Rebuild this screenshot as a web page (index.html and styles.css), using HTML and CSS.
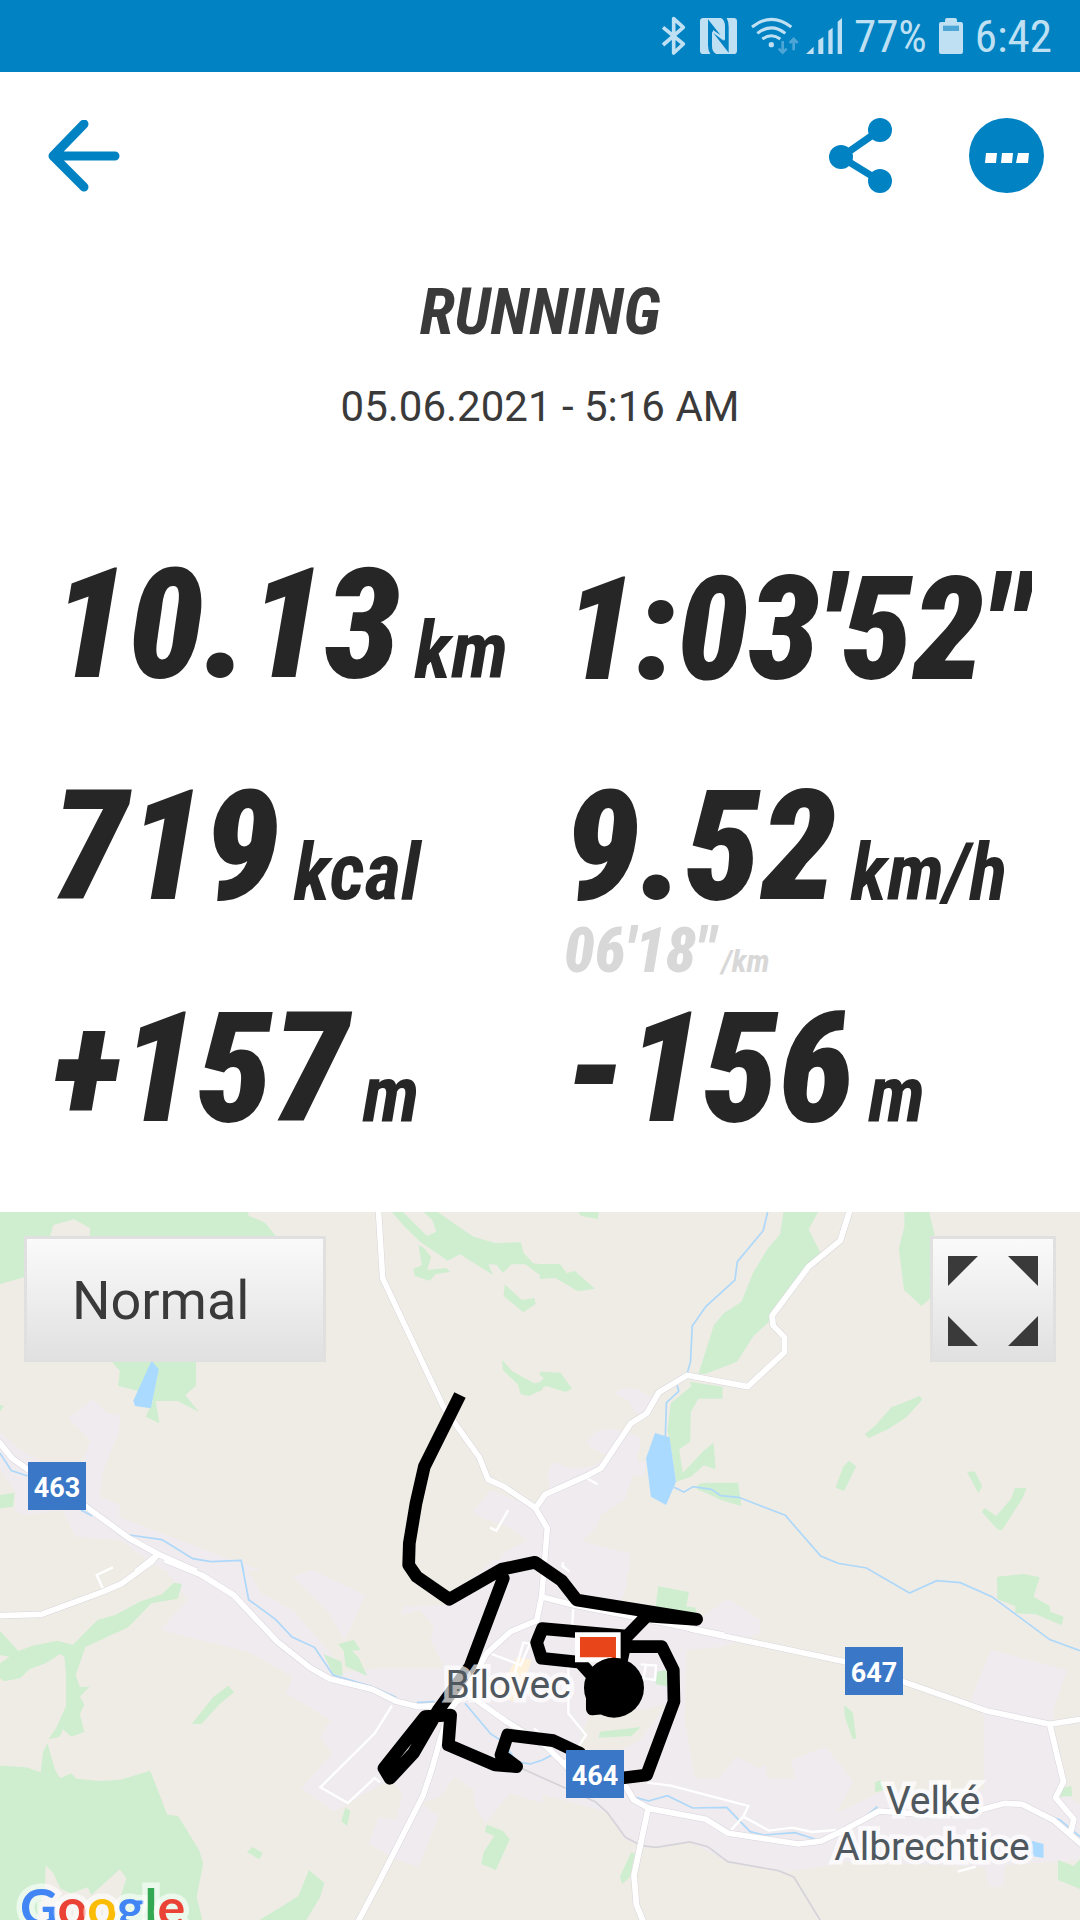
FILE: index.html
```html
<!DOCTYPE html>
<html lang="en">
<head>
<meta charset="utf-8">
<meta name="viewport" content="width=device-width, initial-scale=1">
<title>Running</title>
<link rel="stylesheet" href="styles.css">
</head>
<body>
<div class="status">
  <svg class="bt" viewBox="60 48 75 120"><path d="M66 82L127 132L98 159V56L127 82L66 135" fill="none" stroke="currentColor" stroke-width="11" stroke-linejoin="round"/></svg>
  <svg class="nfc" viewBox="177 54 111 108"><path fill="currentColor" d="M187 54H240Q252 60 252 80V122L201 58V136Q201 152 208 162H187Q177 162 177 152V64Q177 54 187 54ZM257 54H278Q288 54 288 64V152Q288 162 278 162H226Q213 156 213 138V94L263 158V82Q263 64 257 54ZM216 90L248 112V122L216 98Z"/></svg>
  <svg class="wifi" viewBox="330 48 147 117"><g fill="none" stroke="currentColor" stroke-width="9"><path d="M333 78Q391 32 451 78M349 97Q391 64 433 97M364 114Q391 94 418 114"/></g><circle cx="391" cy="131" r="8" fill="currentColor"/><path class="dim" d="M425 120V154M413 143L425 155L437 143M458 148V114M446 126L458 114L470 126" fill="none" stroke-width="8"/></svg>
  <svg class="signal" viewBox="493 51 108 108"><path fill="currentColor" d="M493 159L516 137V159ZM530 159V118L545 108V159ZM560 159V90L573 80V159ZM588 159V62L601 51V159Z"/></svg>
  <span>77%</span>
  <svg class="battery" viewBox="894 54 72 108"><path fill="currentColor" d="M900 66H912V60Q912 54 918 54H942Q948 54 948 60V66H960Q966 66 966 72V156Q966 162 960 162H900Q894 162 894 156V72Q894 66 900 66Z"/><path fill="#4da6d5" d="M906 77H954V93H906Z"/></svg>
  <time>6:42</time>
</div>

<header class="toolbar">
  <button class="icon-button back" aria-label="Back"><svg viewBox="0 0 72 72"><path d="M36 4L5 36L36 67M5 36H67" fill="none" stroke="currentColor" stroke-width="9" stroke-linecap="round" stroke-linejoin="round"/></svg></button>
  <button class="icon-button share" aria-label="Share"><svg viewBox="0 0 63 75"><path d="M51 12L12 39L51 63" fill="none" stroke="currentColor" stroke-width="7"/><g fill="currentColor"><circle cx="51" cy="12" r="12"/><circle cx="12" cy="39" r="12"/><circle cx="51" cy="63" r="12"/></g></svg></button>
  <button class="icon-button more" aria-label="More"><svg viewBox="0 0 75 75"><circle cx="37.5" cy="37.5" r="37.5" fill="currentColor"/><path fill="#fff" d="M17 35H28L27 45H16ZM33 35H44L43 45H32ZM49 35H60L59 45H47Z"/></svg></button>
</header>

<main>
  <section class="heading">
    <h1>RUNNING</h1>
    <p>05.06.2021 - 5:16 AM</p>
  </section>

  <section class="stats">
    <div class="stat"><strong>10.13</strong><span>km</span></div>
    <div class="stat duration"><strong>1:03'52"</strong></div>
    <div class="stat"><strong>719</strong><span>kcal</span></div>
    <div class="stat"><strong>9.52</strong><span>km/h</span>
      <div class="pace"><b>06'18"</b><span>/km</span></div>
    </div>
    <div class="stat"><strong>+157</strong><span>m</span></div>
    <div class="stat"><strong>-156</strong><span>m</span></div>
  </section>

  <section class="map">
    <svg class="canvas" viewBox="0 0 1080 708">
      <defs>
        <g id="roads">
          <g transform="translate(0 -2) scale(.3444 .3333)"><path d="M-10 690L0 700L35 745L80 778L250 890L375 985L460 1033L570 1083M460 1033L395 1085"/></g>
          <g transform="translate(540 -2) scale(.3444 .3333)"><path d="M903 -10L872 92L780 170L674 317L677 347L710 382L710 427L603 530L427 496L345 547L310 610L264 640L177 775L130 800L15 853L-12 893"/></g>
          <g transform="translate(0 348) scale(.3444 .3333)"><path d="M460 -20L440 5L355 70L300 95L120 163L-10 167M478 0L585 45L678 105L805 245L900 323L958 357L1080 388L1150 424L1215 440L1262 437L1320 440"/></g>
          <g transform="translate(360 158) scale(.3333)"><path d="M54 -500L68 -275L250 110L285 160L358 262L384 328L432 350L525 413L562 475L545 680L530 752L452 785L380 850L320 960L270 1020L240 1110L218 1190L190 1275L60 1530L-40 1720M550 682L640 705L840 745L1090 795M320 970L440 1055L560 1130L640 1210"/></g>
          <g transform="translate(540 348) scale(.3444 .3333)"><path d="M430 203L440 208L886 305L1054 365L1295 452L1480 493L1580 476M1480 493L1520 665L1497 713L1550 778L1540 820M70 600L100 640L250 680L272 720L318 746L482 778L547 820L750 852L815 844L880 812L985 753L1130 765L1260 755L1350 730L1400 733L1490 780L1580 860M314 746L273 945L280 1035L300 1085"/></g>
        </g>
      </defs>

      <rect class="land" width="1080" height="708"/>

      <g class="urban">
        <path transform="translate(0 -2) scale(.3444 .3333)" d="M198 625L270 568L310 610L350 615L345 665L300 780L290 860L348 885L345 920L480 975L760 1083H480L400 1030L350 990L220 980L180 900L80 915L45 905V840L0 780V665L60 720L120 755H240L262 690ZM1372 905L1425 840L1500 870L1575 890V1083H1430L1460 1030L1530 990L1465 945L1400 925Z"/>
        <path transform="translate(540 -2) scale(.3444 .3333)" d="M215 550L240 533L290 540L318 560H345L310 610H275L260 575ZM135 695L160 665L205 655L290 680V710L280 750L308 760L303 800L270 795L245 870L175 915L160 960L120 993L260 1030V1083H-5V880L30 840L20 790L40 757L90 775L150 770L200 740L150 715Z"/>
        <path transform="translate(0 348) scale(.3444 .3333)" d="M460 0H700L760 100L850 150L960 280L990 340L1100 325H1290L1250 240L1260 200L1220 150L1165 165L1170 140L1290 135L1430 0H1575V730L1480 700L1410 790L1380 740L1375 690L1320 650L1280 710L1220 730L1275 765L1215 920L1150 900L1070 850L1100 770L1150 780L1170 700L1130 660L970 755L875 685L965 580L930 530L960 480L830 400L850 350L720 275L465 210L545 120ZM850 50L905 30L1060 105L1020 200L1000 240L950 150Z"/>
        <path transform="translate(540 348) scale(.3444 .3333)" fill-rule="evenodd" d="M-5 0H258L250 80L220 170L395 190L450 185L545 115L640 180V220L530 260L425 270L420 480L450 655H520L570 590L635 625L655 612L660 655H740L730 600L830 560L910 665L860 760L1000 690H1290V470L1250 420L1310 270L1530 330L1490 450L1510 690L1575 740V900L1350 915L1345 980H1305L1290 920L900 905L720 935L545 905L435 846L337 862L250 840L195 757L-5 700ZM150 440L300 450L370 430L290 540L180 600L110 560Z"/>
      </g>
      <path class="centre" transform="translate(360 158) scale(.3333)" d="M472 862L515 870L490 940L460 995L405 965L440 920Z"/>

      <g class="forest">
        <path transform="translate(0 -2) scale(.3444 .3333)" fill-rule="evenodd" d="M0 6H720L722 17L770 38L802 80H75V200L0 222ZM155 45L215 28L262 55L260 80H145ZM320 450H569V527L538 556L578 606L516 573H452L463 640L423 620L445 570L397 542L343 527L348 482ZM1138 6L1175 50L1220 95L1300 152L1335 133L1432 195L1418 163L1442 164L1460 189L1485 163H1525L1575 200V163L1548 160L1520 128L1512 96L1440 100L1375 80L1270 6ZM1170 6L1240 78L1267 65L1255 30L1230 6ZM1215 105L1232 115L1252 142L1240 180L1295 174L1308 186L1265 192L1248 212L1205 198L1200 178L1225 165ZM1466 223L1515 270L1552 264L1555 282L1520 307L1462 258ZM1458 450L1488 484L1550 520L1575 515V540L1535 558L1512 552L1503 523L1460 480ZM0 585L12 587L0 604ZM0 855L42 848L38 890L0 895Z"/>
        <path transform="translate(540 -2) scale(.3444 .3333)" d="M707 6H808L780 58L815 130L775 170L675 310L665 335L620 378L572 455L480 492H460L505 345L535 308L585 275L620 185L660 118L697 73ZM435 515L530 530V566H460L438 605L436 695L404 718L415 788L475 722L504 698L510 778L476 766L438 800L396 815L378 700L370 660L380 580L440 528ZM1058 6H1130L1145 70L1133 265L1108 288L1057 240L1042 115L1058 50ZM110 6H171L168 27L120 18ZM0 162H58L78 190L100 182L160 236L110 244L45 204L0 207ZM0 485L60 488L93 536L73 546L18 528L0 537V515L12 505L0 495ZM943 673L975 645L1020 592L1103 558L1110 569L1062 623L1010 658L955 684ZM858 833L880 770L897 752L918 769L883 843ZM1240 786L1262 784L1284 829L1273 850ZM1283 906L1291 894L1325 918L1368 866L1379 834H1413L1400 866L1342 960L1328 958ZM460 822L480 818H575L585 888L525 870L485 850L455 838Z"/>
        <path transform="translate(0 348) scale(.3444 .3333)" fill-rule="evenodd" d="M0 212L53 273L95 257L165 242L212 254L283 180L335 165L405 125L470 103L505 68L528 72L516 116L440 130L372 202L248 261L220 345L232 381L260 380L232 410L245 433L232 463L245 515L207 530L183 508L173 530L141 538L165 500L192 437V350L187 290L175 282L133 310L85 328L60 354L12 364L0 355V310L28 290L0 285ZM138 550L160 630L175 655L207 640L222 656L290 663L350 659L436 632L486 764L517 768L578 870L590 910L571 1010L588 1083H0V617L75 622L118 637L125 575ZM133 915L155 940L175 985L205 1000L255 982L265 1005L348 928L367 955L350 1010L330 1083H105L130 985ZM557 491L620 410L662 377L680 397L640 430L585 492ZM982 252L1027 240L1047 270L1022 272L1042 293L1066 348L1003 318L998 272ZM940 283L992 305L995 347L968 345ZM1003 743L1017 752L1008 798L991 784ZM717 876L733 861L763 879L753 898ZM1413 794L1460 812L1480 838L1440 930L1397 912L1405 875L1435 828L1408 815ZM897 930L942 968L930 1010L888 1083H748L810 1045L867 1007Z"/>
        <path transform="translate(540 348) scale(.3444 .3333)" d="M343 79L432 96L425 140L450 142L460 170L335 150ZM1327 50L1405 42L1451 52L1433 110L1480 138L1482 155L1520 170L1515 196L1440 163L1380 160V138L1328 118ZM883 435L908 457L918 535L908 538L885 470ZM170 533L175 515L293 501L265 528ZM340 335L368 330L372 380L335 372ZM973 667L990 660L1000 690L973 697ZM1510 710L1518 685L1543 677L1545 708ZM265 877L275 880L262 950L238 972L232 950ZM1504 900L1550 918L1575 890V990L1504 960Z"/>
      </g>

      <g class="lake">
        <path transform="translate(0 -2) scale(.3444 .3333)" d="M440 452L461 478L438 595L392 588L387 572Z"/>
        <path transform="translate(540 -2) scale(.3444 .3333)" d="M334 669L376 682L395 815L366 885L322 860L308 745Z"/>
        <path transform="translate(540 348) scale(.3444 .3333)" d="M1427 842L1462 852V894L1427 888Z"/>
      </g>

      <g class="stream">
        <path transform="translate(0 -2) scale(.3444 .3333)" d="M0 730L33 782L80 798M235 900L268 918M375 975L470 989L560 1046L612 1055L700 1051L707 1083"/>
        <path transform="translate(540 -2) scale(.3444 .3333)" d="M661 6L648 62L573 155L566 210L482 289L442 348L437 455L428 488M398 526L403 544L367 578L364 680M389 832L418 846L445 830L498 838L525 857L577 862L712 916L815 1038L865 1060L948 1074L1073 1149L1152 1112L1220 1118L1312 1160L1480 1289L1568 1322"/>
        <path transform="translate(0 348) scale(.3444 .3333)" d="M702 10L722 119L800 178L848 231L913 262L967 345L1080 380L1150 412M1210 428L1262 425M1350 430L1425 522L1460 545L1500 605L1540 612L1575 600L1603 585"/>
        <path transform="translate(540 348) scale(.3444 .3333)" d="M280 713L315 723L370 707L443 744L542 742L610 815L650 825L740 818L800 838M920 790L980 740M1470 765L1510 780L1568 830"/>
      </g>

      <g class="rail">
        <path transform="translate(540 348) scale(.3444 .3333)" d="M-60 622L0 650L75 685L160 725L195 757L248 832L295 857L337 862L435 846L487 860L545 905L692 932L737 951L815 1083"/>
      </g>

      <g class="lane">
        <path transform="translate(0 348) scale(.3444 .3333)" d="M328 22L281 45L298 85M1138 437L1088 520L930 682L1010 729L1088 654L1104 667"/>
        <path transform="translate(360 158) scale(.3333)" d="M445 420L409 482L390 473M680 325L713 343M610 577L607 588L628 605M395 852L480 885M460 925L490 818L510 822L480 890M640 715L635 790M625 880V1030L678 1095L655 1130M842 883L888 887L885 930L850 925L858 885M522 1075L560 1105"/>
        <path transform="translate(540 348) scale(.3444 .3333)" d="M310 668L380 677L605 738L590 770L555 810M590 770L665 812L732 803L790 816L860 810M1213 935L1265 920"/>
      </g>

      <use href="#roads" class="casing"/>
      <use href="#roads" class="road"/>

      <g transform="translate(360 158) scale(.3333)">
        <g class="route">
          <path stroke-linecap="butt" d="M300 75L193 290L168 400L148 520L146 585L170 620L268 688L425 598L525 577L605 632L650 690L1010 748L860 738L800 800L785 870"/>
          <path d="M430 625L330 890L235 1020L160 1150L90 1225L72 1195L195 1040L272 1035L265 1125L405 1185L470 1190L423 1155L443 1095L580 1112L660 1150M780 1225L860 1215L942 995L940 900L905 830H800M800 798L547 776L530 818L545 865L660 877L690 910"/>
          <path d="M697 950V1017L720 1015"/>
        </g>
        <path fill="#fff" d="M645 787H782V877H645Z"/>
        <path fill="#e8461a" d="M660 801H768V877H755V862H660Z"/>
        <circle cx="762" cy="953" r="90"/>
      </g>

      <g class="shield">
        <rect x="28" y="250" width="58" height="48"/><text x="57" y="285">463</text>
        <rect x="845" y="435" width="58" height="48"/><text x="874" y="470">647</text>
        <rect x="566" y="538" width="58" height="48"/><text x="595" y="573">464</text>
      </g>
      <g class="place">
        <text x="508" y="486">Bílovec</text>
        <text x="933" y="602">Velké</text>
        <text x="932" y="648">Albrechtice</text>
      </g>
      <text class="google" x="20" y="714"><tspan fill="#4285f4">G</tspan><tspan fill="#ea4335">o</tspan><tspan fill="#fbbc05">o</tspan><tspan fill="#4285f4">g</tspan><tspan fill="#34a853">l</tspan><tspan fill="#ea4335">e</tspan></text>
    </svg>
    <div class="controls">
      <select class="layer" aria-label="Map type"><option>Normal</option><option>Satellite</option></select>
      <button class="fullscreen" aria-label="Full screen"><svg viewBox="0 0 90 90"><path fill="currentColor" d="M0 0H30L0 30ZM60 0H90V30ZM0 60L30 90H0ZM90 60V90H60Z"/></svg></button>
    </div>
  </section>
</main>
</body>
</html>
```
FILE: styles.css
```css
* {
  box-sizing: border-box;
}

body {
  margin: 0;
  background: #fff;
  color: #3a3a3a;
  font-family: Roboto, "Liberation Sans", sans-serif;
}

button,
select {
  margin: 0;
  font: inherit;
  color: inherit;
  cursor: pointer;
}

svg {
  display: block;
}

/* status bar */
.status {
  display: flex;
  align-items: center;
  justify-content: flex-end;
  gap: 12px;
  height: 72px;
  padding-right: 28px;
  background: #0082c3;
  color: #bfe0f2;
  font-family: "Roboto Condensed", "Liberation Sans Narrow", Roboto, sans-serif;
  font-size: 45px;
}

.bt { width: 25px; height: 40px; margin-right: 2px; }
.nfc { width: 37px; height: 36px; margin-right: 2px; }
.wifi { width: 49px; height: 39px; margin-right: -6px; }
.signal { width: 36px; height: 36px; }
.battery { width: 24px; height: 36px; }
.dim { stroke: #4da6d5; }

/* toolbar */
.toolbar {
  display: flex;
  align-items: center;
  gap: 77px;
  padding: 46px 36px 0 48px;
}

.icon-button {
  padding: 0;
  border: 0;
  background: none;
  color: #0082c3;
}

.back { width: 72px; margin-right: auto; }
.share { width: 63px; }
.more { width: 75px; }

/* heading */
.heading {
  padding-top: 81px;
  text-align: center;
}

h1 {
  margin: 0;
  font: italic 700 65px/76px "Roboto Condensed", "Liberation Sans Narrow", Roboto, sans-serif;
}

.heading p {
  margin: 32px 0 0;
  font-size: 42px;
  line-height: 50px;
}

/* stats */
.stats {
  display: grid;
  grid-template-columns: minmax(0, 1fr) minmax(0, 1fr);
  grid-auto-rows: 222px;
  column-gap: 44px;
  padding: 100px 48px 14px 52px;
  color: #262626;
  font-family: "Roboto Condensed", "Liberation Sans Narrow", Roboto, sans-serif;
  font-style: italic;
  font-weight: 700;
  white-space: nowrap;
}

.stat {
  font-size: 79px;
  line-height: 186px;
}

.stat strong {
  font-size: 153px;
}

.stat > span {
  margin-left: 14px;
}

.duration {
  overflow: hidden;
  line-height: 196px;
}

.stat.duration strong {
  font-size: 144px;
}

.pace {
  margin-top: -44px;
  color: #d8d8d8;
  font-size: 32px;
  line-height: 60px;
}

.pace b {
  font-size: 62px;
}

.pace span {
  margin-left: 6px;
}

/* map */
.map {
  position: relative;
}

.canvas {
  width: 100%;
  height: auto;
  overflow: hidden;
}

.land { fill: #efece6; }
.urban { fill: #efebef; }
.centre { fill: #fff2dc; }
.forest { fill: #ceeecf; }
.lake { fill: #aadaff; }
.stream { fill: none; stroke: #aed8f9; stroke-width: 5; }
.rail { fill: none; stroke: #d5d3da; stroke-width: 5; }
.lane { fill: none; stroke: #fff; stroke-width: 7; }
.casing { fill: none; stroke: #d8d5db; stroke-width: 20; stroke-linejoin: round; }
.road { fill: none; stroke: #fff; stroke-width: 17; stroke-linejoin: round; }
.route { fill: none; stroke: #000; stroke-width: 38; stroke-linejoin: round; stroke-linecap: round; }

.shield rect { fill: #3a78c7; }
.shield text {
  fill: #fff;
  font-size: 27px;
  font-weight: 700;
  text-anchor: middle;
}

.place text {
  fill: #50585f;
  stroke: rgba(255, 255, 255, 0.7);
  stroke-width: 9;
  paint-order: stroke;
  font-size: 39px;
  text-anchor: middle;
}

.google {
  stroke: rgba(255, 255, 255, 0.6);
  stroke-width: 11;
  paint-order: stroke;
  font: 700 52px Lato, sans-serif;
}

.controls {
  position: absolute;
  inset: 24px 24px auto;
  display: flex;
  justify-content: space-between;
}

.layer,
.fullscreen {
  height: 126px;
  border: 3px solid #e0e0e0;
  border-bottom: 0;
  border-radius: 0;
  background: linear-gradient(#fafafa, #e0e0e0);
  color: #3a3a3a;
}

.layer {
  width: 302px;
  padding: 0 0 0 45px;
  appearance: none;
  font-size: 54px;
}

.fullscreen {
  width: 126px;
  padding: 0 15px;
}
```
